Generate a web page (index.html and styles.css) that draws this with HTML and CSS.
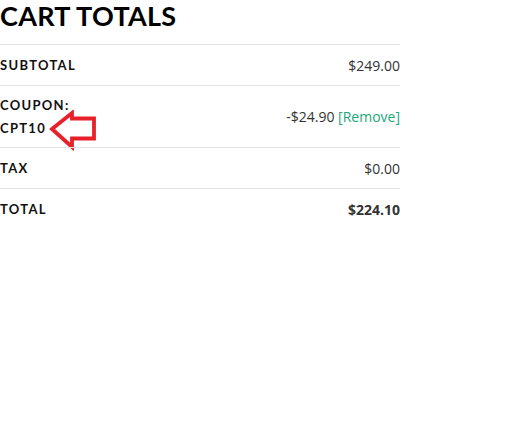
FILE: index.html
```html
<!DOCTYPE html>
<html lang="en">
<head>
  <meta charset="UTF-8">
  <title>Cart Totals</title>
  <link rel="stylesheet" href="styles.css">
</head>
<body>
  <div class="cart-totals">
    <h2>CART TOTALS</h2>
    <div class="totals-row">
      <div class="label">SUBTOTAL</div>
      <div class="value">$249.00</div>
    </div>
    <div class="totals-row coupon-row">
      <div class="label">COUPON:<br>CPT10</div>
      <div class="value">-$24.90 <a href="#" class="remove">[Remove]</a></div>
      <svg class="arrow" width="52" height="42" viewBox="0 0 52 42">
        <path d="M4 19 L24 3 L24 8.5 L46 8.5 L46 28.5 L24 28.5 L24 37 Z" fill="none" stroke="#e8202a" stroke-width="3.8" stroke-linejoin="miter"/>
      </svg>
    </div>
    <div class="totals-row">
      <div class="label">TAX</div>
      <div class="value">$0.00</div>
    </div>
    <div class="totals-row">
      <div class="label">TOTAL</div>
      <div class="value total">$224.10</div>
    </div>
  </div>
</body>
</html>
```

FILE: styles.css
```css
body {
  margin: 0;
  background: #fff;
  font-family: Lato, 'Noto Sans', Arial, sans-serif;
  color: #111;
}
.cart-totals {
  width: 400px;
}
h2 {
  font-size: 27px;
  font-weight: 700;
  margin: 0;
  height: 44px;
  line-height: 32px;
  letter-spacing: 0.3px;
  color: #000;
}
.totals-row {
  position: relative;
  display: flex;
  justify-content: space-between;
  align-items: center;
  border-top: 1px solid #e3e3e3;
  height: 40px;
}
.coupon-row {
  height: 61px;
}
.label {
  font-size: 13px;
  font-weight: 700;
  letter-spacing: 1.3px;
  line-height: 23px;
  color: #111;
}
.value {
  font-family: 'Open Sans', Arial, sans-serif;
  font-size: 14px;
  color: #333;
}
.value.total {
  font-weight: 700;
}
.remove {
  color: #22a877;
  text-decoration: none;
}
.arrow {
  position: absolute;
  left: 48px;
  top: 24px;
}
```
